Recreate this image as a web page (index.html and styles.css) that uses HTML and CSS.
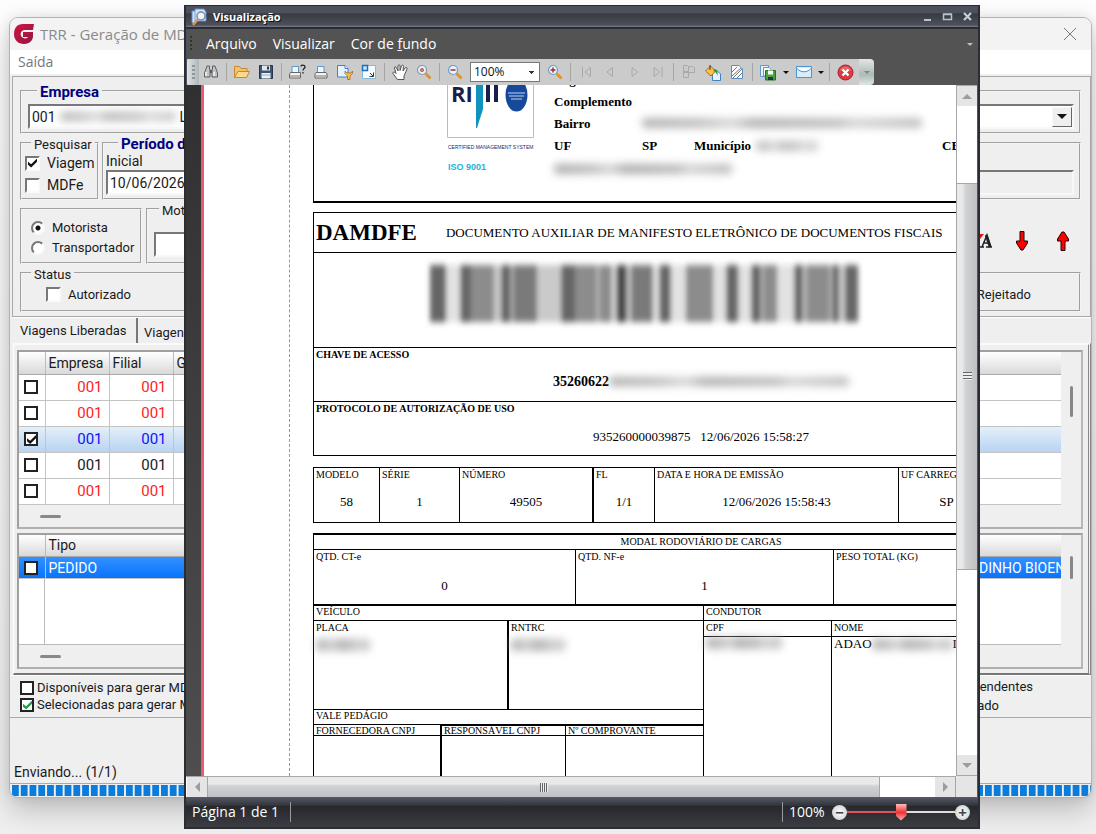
FILE: index.html
```html
<!DOCTYPE html>
<html lang="pt-BR">
<head>
<meta charset="utf-8">
<title>Visualização</title>
<link rel="stylesheet" href="styles.css">
</head>
<body>
<main class="app">
  <header class="app-title">
    <svg class="logo" width="22" height="22" viewBox="0 0 22 22"><defs><linearGradient id="lg" x1="0" y1="0" x2="1" y2="1"><stop offset="0" stop-color="#d3123f"/><stop offset="1" stop-color="#8d1a45"/></linearGradient></defs><path d="M21 1H10C4 1 1 5 1 11s4 10 10 10 9-4 9-8V9H10v5h5c-1 2-5 2-7-1-1-3 0-5 3-6h9z" fill="url(#lg)"/></svg>
    <h1>TRR - Geração de MDFe</h1>
    <button class="app-close" aria-label="Fechar"><svg width="14" height="14" viewBox="0 0 14 14"><path d="M1 1l12 12M13 1L1 13" stroke="#777" fill="none"/></svg></button>
  </header>
  <nav class="app-menu"><a href="#">Saída</a></nav>

  <form class="filters">
    <fieldset class="group company">
      <legend class="strong">Empresa</legend>
      <div class="field combo"><span>001</span><i class="smudge company-smudge"></i><span>LTDA</span><button type="button" class="combo-btn" aria-label="Abrir lista"><i class="tri"></i></button></div>
    </fieldset>
    <div class="row">
      <fieldset class="group search">
        <legend>Pesquisar</legend>
        <label><input class="tick" type="checkbox" checked>Viagem</label>
        <label><input class="tick" type="checkbox">MDFe</label>
      </fieldset>
      <fieldset class="group period">
        <legend class="strong">Período de</legend>
        <div class="period-row">
          <label class="stack">Inicial<input class="field" type="text" value="10/06/2026"></label>
          <input class="field flat" type="text" aria-label="Filtro" readonly>
        </div>
      </fieldset>
    </div>
    <div class="row">
      <fieldset class="group plain">
        <label><input class="dot" type="radio" name="quem" checked>Motorista</label>
        <label><input class="dot" type="radio" name="quem">Transportador</label>
      </fieldset>
      <fieldset class="group driver">
        <legend>Motorista</legend>
        <input class="field" type="text" aria-label="Motorista">
      </fieldset>
      <div class="tools">
        <button type="button" aria-label="Fonte"><svg width="22" height="20" viewBox="0 0 22 20"><path d="M6 3h7l-4 5z" fill="#e11"/><path d="M9 16h4M15 16h6M11 16l5-12 4 12M12.500 12h5" stroke="#222" stroke-width="1.500" fill="none"/><path d="M15 4l4 12" stroke="#222" stroke-width="2.500"/></svg></button>
        <button type="button" aria-label="Descer"><svg width="14" height="22" viewBox="0 0 14 22"><path d="M5 1.500h4V11h3.500v2L8 20H6l-4.500-7v-2H5z" fill="#f00" stroke="#200" stroke-width="1"/></svg></button>
        <button type="button" aria-label="Subir"><svg width="14" height="22" viewBox="0 0 14 22"><path d="M5 20.500h4V11h3.500V9L8 2H6L1.500 9v2H5z" fill="#f00" stroke="#200" stroke-width="1"/></svg></button>
      </div>
    </div>
    <fieldset class="group status">
      <legend>Status</legend>
      <div class="status-row">
        <label><input class="tick" type="checkbox">Autorizado</label>
        <label>Rejeitado</label>
      </div>
    </fieldset>
  </form>

  <div class="tabs"><button class="tab on">Viagens Liberadas</button><button class="tab">Viagens</button></div>
  <section class="tab-page">
    <div class="grid-box">
      <table class="grid">
        <colgroup><col class="c-tick"><col class="c-num"><col class="c-num"><col></colgroup>
        <thead><tr><th></th><th>Empresa</th><th>Filial</th><th>Grupo</th></tr></thead>
        <tbody>
          <tr class="red"><td><input class="box" type="checkbox" aria-label="Linha 1"></td><td>001</td><td>001</td><td></td></tr>
          <tr class="red"><td><input class="box" type="checkbox" aria-label="Linha 2"></td><td>001</td><td>001</td><td></td></tr>
          <tr class="picked"><td><input class="box" type="checkbox" aria-label="Linha 3" checked></td><td>001</td><td>001</td><td></td></tr>
          <tr><td><input class="box" type="checkbox" aria-label="Linha 4"></td><td>001</td><td>001</td><td></td></tr>
          <tr class="red"><td><input class="box" type="checkbox" aria-label="Linha 5"></td><td>001</td><td>001</td><td></td></tr>
        </tbody>
      </table>
      <i class="vbar"></i><i class="hbar"></i>
    </div>
    <div class="grid-box second">
      <div class="grid-fill">
      <table class="grid">
        <colgroup><col class="c-tick"><col><col class="c-name"></colgroup>
        <thead><tr><th></th><th>Tipo</th><th></th></tr></thead>
        <tbody><tr class="blue"><td><input class="box" type="checkbox" aria-label="Pedido"></td><td>PEDIDO</td><td>DINHO BIOEN</td></tr></tbody>
      </table>
      <div class="grid-empty"></div>
      </div>
      <i class="vbar"></i><i class="hbar"></i>
    </div>
  </section>
  <section class="notes">
    <div><label><input class="box" type="checkbox">Disponíveis para gerar MDFe</label><label><input class="box green" type="checkbox" checked>Selecionadas para gerar MDFe</label></div>
    <div class="notes-right"><span>Pendentes</span><span>Autorizado</span></div>
  </section>
  <footer class="sending"><p>Enviando... (1/1)</p><div class="progress" role="progressbar" aria-label="Enviando"><i></i></div></footer>
</main>

<section class="viewer">
  <header class="v-title">
    <svg width="16" height="18" viewBox="0 0 16 18"><path d="M1 3h3V1h9l2 3v9H5v2H1z" fill="#cfe3fa" stroke="#5c8fd0"/><path d="M4 3v10" stroke="#7aa5de"/><circle cx="10" cy="8" r="4" fill="#e8f6ff" stroke="#889" stroke-width="1.500"/><path d="M7 11l-5 6" stroke="#e0954a" stroke-width="2.500"/></svg>
    <h2>Visualização</h2>
    <button aria-label="Minimizar"><svg width="11" height="11"><path d="M2 9h7" stroke="#b5c3cd" stroke-width="2"/></svg></button>
    <button aria-label="Maximizar"><svg width="11" height="11"><path d="M1.500 3.500h8v5h-8zM1 3h9" stroke="#b5c3cd" stroke-width="1.500" fill="none"/></svg></button>
    <button aria-label="Fechar"><svg width="11" height="11"><path d="M2 2l7 7M9 2L2 9" stroke="#c3ced6" stroke-width="2.200"/></svg></button>
  </header>
  <nav class="v-menu"><i class="grip"></i><a href="#">Arquivo</a><a href="#">Visualizar</a><a href="#">Cor de <u>f</u>undo</a><i class="tri small pale"></i></nav>
  <div class="v-tools">
    <div class="tool-strip">
      <i class="grip light"></i>
      <button aria-label="Localizar"><svg width="16" height="16" viewBox="0 0 16 16"><path d="M4 2h2.500v3L7 6v7H1.500V9z M12 2H9.500v3L9 6v7h5.500V9z" fill="#bfc4c8" stroke="#555" stroke-width=".9"/><path d="M3 8v4M11 8v4" stroke="#fff" stroke-width="1.200"/><path d="M7 6h2v3H7z" fill="#555"/></svg></button>
      <i class="sep"></i>
      <button aria-label="Abrir"><svg width="18" height="16" viewBox="0 0 18 16"><path d="M1.500 13.500V2.500h5l1.500 2h6v3" fill="#f3c269" stroke="#c8862d"/><path d="M1.500 13.500L5 7.500h11.500L13.500 13.500z" fill="#ffd98c" stroke="#c8862d"/></svg></button>
      <button aria-label="Salvar"><svg width="16" height="16" viewBox="0 0 16 16"><path d="M1.500 1.500h13v13h-13z" fill="#3f5670" stroke="#27384c"/><path d="M4 1.500h8v5H4z" fill="#dfe6ec"/><path d="M3.500 9h9v5.500h-9z" fill="#eaf0f4"/><path d="M9 2.500h2v3H9z" fill="#27384c"/><path d="M4 11h8" stroke="#9ab"/></svg></button>
      <i class="sep"></i>
      <button aria-label="Imprimir com opções"><svg width="18" height="16" viewBox="0 0 18 16"><path d="M4 8V2.500h6.500V8" fill="#eef7ff" stroke="#5f97c4"/><path d="M2.500 8.500h10v5.500h-11V10z" fill="#f2f2f2" stroke="#666"/><path d="M2 12h10" stroke="#777"/><path d="M13 2.500c0-2 4-2 4 .5 0 1.500-2 1.500-2 3.500M15 8v1.500" stroke="#222" stroke-width="1.300" fill="none"/></svg></button>
      <button aria-label="Imprimir"><svg width="16" height="16" viewBox="0 0 16 16"><path d="M4.500 8V2.500H11V8" fill="#eef7ff" stroke="#5f97c4"/><path d="M3 8.500h10l1 1.500v4H2v-4z" fill="#f2f2f2" stroke="#666"/><path d="M2.500 12h11" stroke="#777"/></svg></button>
      <button aria-label="Configurar página"><svg width="18" height="16" viewBox="0 0 18 16"><path d="M1.500 1.500H9l3 3v8.500H1.500z" fill="#e6f3ff" stroke="#3c82c4"/><path d="M9 1.500v3h3" fill="#fff" stroke="#3c82c4"/><path d="M9 7v2.500l2.500 2.500v3.500h2.500V12L16.500 9.500V7l-1.500 2h-4z" fill="#ffc246" stroke="#a8691a" stroke-width=".8"/></svg></button>
      <button aria-label="Escala"><svg width="16" height="16" viewBox="0 0 16 16"><path d="M1.500 1.500h13v13h-13z" fill="#f6fbff" stroke="#8ab9dc"/><path d="M1.500 1.500h5v5h-5z" fill="#c7e2fa" stroke="#1c6fbd" stroke-width="1.500"/><path d="M9 9l3 3M12.500 8.500v4h-4" stroke="#333" fill="none"/></svg></button>
      <i class="sep"></i>
      <button aria-label="Mover"><svg width="17" height="17" viewBox="0 0 17 17"><path d="M5.500 15.500L1 9.500c-.5-1.500 1-2 2-1l1 1L2.500 4C2.500 2.500 4 2.500 4.500 4L6 7V2c0-1.500 2-1.500 2 0v4.500L9.500 2c.5-1.500 2-1 2 .5L11 7l2-3c1-1.200 2.500-.5 2 1l-3 7v3.500z" fill="#fff" stroke="#444" stroke-width=".9"/></svg></button>
      <button aria-label="Lupa"><svg width="16" height="16" viewBox="0 0 16 16"><path d="M9.500 9.500l5 5" stroke="#d9962f" stroke-width="2.800"/><circle cx="6" cy="6" r="4.500" fill="#e7f3fc" stroke="#8299ac" stroke-width="1.200"/><circle cx="6" cy="6" r="1.600" fill="#e58a80" stroke="#a44" stroke-width=".8"/></svg></button>
      <i class="sep"></i>
      <button aria-label="Reduzir"><svg width="16" height="16" viewBox="0 0 16 16"><path d="M9.500 9.500l5 5" stroke="#d9962f" stroke-width="2.800"/><circle cx="6" cy="6" r="4.500" fill="#e7f3fc" stroke="#6d9ccb" stroke-width="1.200"/><path d="M3.500 6h5" stroke="#a03030" stroke-width="1.500"/></svg></button>
      <select class="zoom" aria-label="Zoom"><option>100%</option></select>
      <button aria-label="Ampliar"><svg width="16" height="16" viewBox="0 0 16 16"><path d="M9.500 9.500l5 5" stroke="#d9962f" stroke-width="2.800"/><circle cx="6" cy="6" r="4.500" fill="#e7f3fc" stroke="#6d9ccb" stroke-width="1.200"/><path d="M3.500 6h5M6 3.500v5" stroke="#a03030" stroke-width="1.500"/></svg></button>
      <i class="sep"></i>
      <button aria-label="Primeira"><svg class="off" width="16" height="16" viewBox="0 0 16 16"><path d="M4.500 3v10M12.500 3.500v9L7 8z"/></svg></button>
      <button aria-label="Anterior"><svg class="off" width="16" height="16" viewBox="0 0 16 16"><path d="M10.500 3.500v9L5 8z"/></svg></button>
      <button aria-label="Próxima"><svg class="off" width="16" height="16" viewBox="0 0 16 16"><path d="M6 3.500v9L11.500 8z"/></svg></button>
      <button aria-label="Última"><svg class="off" width="16" height="16" viewBox="0 0 16 16"><path d="M4 3.500v9L9.500 8zM12 3v10"/></svg></button>
      <i class="sep"></i>
      <button aria-label="Várias páginas"><svg class="off" width="16" height="16" viewBox="0 0 16 16"><path d="M2.500 1.500h4l1 1v5h-5zM8.500 3.500V2.500h3l1 1h1v5h-6M2.500 8.500h5v5h-5z"/></svg></button>
      <button aria-label="Cor"><svg width="18" height="17" viewBox="0 0 18 17"><path d="M8.500 7h5l3 3v6.500h-8z" fill="#e6f3ff" stroke="#3c82c4"/><path d="M1.500 7l5-5 5 5-4.500 5z" fill="#ffc246" stroke="#a8691a"/><path d="M6 1v5" stroke="#333"/><path d="M10 5c3 0 4 2 3.500 7-1-3-2-4-4-5z" fill="#2f9a3c"/></svg></button>
      <button aria-label="Marca d’água"><svg width="16" height="16" viewBox="0 0 16 16"><path d="M2.500 1.500H10l3.500 3.500v9.500h-11z" fill="#f7fbff" stroke="#5c8fc0"/><path d="M3 8l5-5M3 12l9-8M4 14l9-9M8 14l5-5" stroke="#777"/></svg></button>
      <i class="sep"></i>
      <button aria-label="Exportar"><svg width="18" height="17" viewBox="0 0 18 17"><path d="M1.500 1.500h8v11h-8z" fill="#e6f3ff" stroke="#5c9ace"/><path d="M4.500 3.500H10l2 2V12H4.500z" fill="#fff" stroke="#5c9ace"/><path d="M6.500 6.500h10v9.500h-10z" fill="#4aa63a" stroke="#267018"/><path d="M9 6.500h5v4H9z" fill="#fff"/><path d="M9 13h5v3H9z" fill="#234"/></svg></button>
      <button class="drop" aria-label="Formatos"><i class="tri small"></i></button>
      <button aria-label="E-mail"><svg width="18" height="14" viewBox="0 0 18 14"><path d="M1.500 1.500h15v11h-15z" fill="#d9eefd" stroke="#4a94cf"/><path d="M1.500 3c4 5 11 5 15 0" fill="#fff" stroke="#4a94cf"/></svg></button>
      <button class="drop narrow" aria-label="Opções de e-mail"><i class="tri small"></i></button>
      <i class="sep"></i>
      <button aria-label="Fechar visualização"><svg width="17" height="17" viewBox="0 0 17 17"><circle cx="8.500" cy="8.500" r="7.500" fill="#da3a40" stroke="#a81f2a"/><path d="M2.500 7c1-6 11-6 12 0-4-2-8-2-12 0z" fill="#f07a7a" opacity=".7"/><path d="M5.500 5.500l6 6M11.500 5.500l-6 6" stroke="#fff" stroke-width="2.400"/></svg></button>
    </div>
    <button class="more" aria-label="Mais botões"><i class="tri small pale"></i></button>
  </div>

  <div class="v-body">
    <div class="view">
      <div class="page">
        <article class="sheet">
          <section class="issuer">
            <svg class="cert" width="90" height="110" viewBox="0 0 90 110">
              <path d="M.5 0v72.500h86V0" fill="#fff" stroke="#b9bcc8"/>
              <text x="4" y="37" class="rina">RI</text><path d="M29 20h7v24l-6 19h-1z" fill="#0f93bd"/><path d="M39 20h4v17h-4zM47 20h4v17h-4z" fill="#1a1f4a"/>
              <ellipse cx="69.500" cy="30" rx="11" ry="16.500" fill="#16489c"/><path d="M61 28h17M62 31h15M64 34h11" stroke="#c4d4f0" stroke-width="1"/>
              <text x="1" y="84" class="cms">CERTIFIED MANAGEMENT SYSTEM</text><text x="1" y="105" class="iso">ISO 9001</text>
            </svg>
            <div class="info">
              <b>Logradouro</b><i></i><i></i><i></i>
              <b>Complemento</b><i></i><i></i><i></i>
              <b>Bairro</b><i class="smudge wide"></i>
              <b>UF</b><b>SP</b><span class="city"><b>Município</b><i class="smudge mid"></i></span><b>CEP</b>
              <i class="smudge mail"></i>
            </div>
          </section>

          <section class="block key">
            <div class="head"><strong>DAMDFE</strong><span>DOCUMENTO AUXILIAR DE MANIFESTO ELETRÔNICO DE DOCUMENTOS FISCAIS</span></div>
            <div class="bars"><svg width="450" height="76" viewBox="420 255 450 76"><defs><filter id="bl" x="-5%" y="-20%" width="110%" height="140%"><feGaussianBlur stdDeviation="2.500 3"/></filter></defs><g filter="url(#bl)"><path d="M430 265h429v57H430z" fill="#cacaca"/><path d="M447 265h13v57h-13zM612 265h4v57h-4zM653 265h6v57h-6zM671 265h14v57h-14zM714 265h12v57h-12zM740 265h11v57h-11zM778 265h16v57h-16z" fill="#e2e2e2"/><g fill="#666"><path d="M430 265h16v57h-16zM460 265h11v57h-11zM501 265h10v57h-10zM561 265h14v57h-14zM659 265h12v57h-12zM726 265h12v57h-12zM751 265h10v57h-10zM794 265h9v57h-9zM832 265h7v57h-7zM845 265h13v57h-13z"/></g><g fill="#8c8c8c"><path d="M471 265h23v57h-23zM575 265h22v57h-22zM599 265h13v57h-13zM686 265h27v57h-27zM763 265h14v57h-14zM806 265h24v57h-24z"/></g><path d="M513 265h24v57h-24zM631 265h22v57h-22z" fill="#7a7a7a"/><path d="M616 265h11v57h-11z" fill="#4c4c4c"/></g></svg></div>
            <div class="line chave"><b>CHAVE DE ACESSO</b><p class="code"><b>35260622</b><i class="smudge key-smudge"></i></p></div>
            <div class="line prot"><b>PROTOCOLO DE AUTORIZAÇÃO DE USO</b><p>935260000039875 &nbsp; 12/06/2026 15:58:27</p></div>
          </section>

          <section class="block ids">
            <div><small>MODELO</small><p>58</p></div><div><small>SÉRIE</small><p>1</p></div><div class="thick"><small>NÚMERO</small><p>49505</p></div><div><small>FL</small><p>1/1</p></div><div><small>DATA E HORA DE EMISSÃO</small><p>12/06/2026 15:58:43</p></div><div><small>UF CARREG.</small><p>SP</p></div>
          </section>

          <section class="modal">
            <h3>MODAL RODOVIÁRIO DE CARGAS</h3>
            <div class="totals"><div><small>QTD. CT-e</small><p>0</p></div><div><small>QTD. NF-e</small><p>1</p></div><div><small>PESO TOTAL (KG)</small></div></div>
            <div class="halves">
              <div class="vehicle">
                <h4>VEÍCULO</h4>
                <div class="plates"><div><small>PLACA</small><i class="smudge tag"></i></div><div><small>RNTRC</small><i class="smudge tag"></i></div></div>
                <h4>VALE PEDÁGIO</h4>
                <div class="toll"><div><small>FORNECEDORA CNPJ</small></div><div><small>RESPONSÁVEL CNPJ</small></div><div><small>Nº COMPROVANTE</small></div></div>
              </div>
              <div class="driver-info">
                <h4>CONDUTOR</h4>
                <div class="people"><div><small>CPF</small><p><i class="smudge cpf"></i></p></div><div><small>NOME</small><p>ADAO<i class="smudge name"></i>D</p></div></div>
              </div>
            </div>
          </section>
        </article>
      </div>
    </div>
    <div class="vscroll"><button aria-label="Acima"><i class="tri up"></i></button><i class="rail"></i><i class="thumb"></i><i class="rest"></i><button aria-label="Abaixo"><i class="tri down"></i></button></div>
    <div class="hscroll"><button aria-label="Esquerda"><i class="tri left"></i></button><i class="thumb"></i><i class="rest"></i><button aria-label="Direita"><i class="tri right"></i></button></div>
    <i class="corner"></i>
  </div>
  <footer class="v-status"><span class="pages">Página 1 de 1</span><div class="zoomer"><label for="z">100%</label><button aria-label="Menos zoom">−</button><input id="z" type="range" min="0" max="100" value="50"><button aria-label="Mais zoom">+</button></div></footer>
</section>
</body>
</html>
```

FILE: styles.css
```css
* { box-sizing: border-box; }
body { margin: 0; min-height: 100vh; display: flex; position: relative; overflow: hidden; background: linear-gradient(#fdfdfd, #f6f6f6 60%, #efefef); font: 13px/16px Roboto, sans-serif; color: #1a1a1a; }
button { border: 0; padding: 0; background: none; font: inherit; color: inherit; display: flex; align-items: center; justify-content: center; }
input, select { font: inherit; color: inherit; margin: 0; }
a { color: inherit; text-decoration: none; }
p, h1, h2, h3, h4 { margin: 0; font: inherit; }
i { font-style: normal; display: block; }
svg { display: block; flex: none; }

/* main window */
.app { flex: 1; min-width: 0; margin: 17px 4px 36px 9px; border: 1px solid #b3b3b3; border-radius: 9px; overflow: hidden; background: #efefef; display: flex; flex-direction: column; box-shadow: 0 12px 28px rgba(0,0,0,.22), 0 0 12px rgba(0,0,0,.08); }
.app-title { height: 32px; background: #f3f3f3; display: flex; align-items: center; gap: 5px; padding: 0 14px 0 3px; font: 15px/20px "Open Sans", sans-serif; color: #8a8a8a; }
.app-title h1 { flex: 1; }
.app-menu { background: #fff; padding: 3px 8px; font: 14px/18px "Open Sans", sans-serif; color: #777; }
.filters { margin: 2px 0 0 2px; border: 1px solid #a8a8a8; padding: 5px 9px 4px 7px; }
.group { margin: 0; padding: 0; min-width: 0; border: 2px groove #f4f4f4; }
.group legend { margin-left: 9px; padding: 3px 3px 0; line-height: 15px; }
.group legend.strong { color: #000080; font-weight: bold; font-size: 15px; margin-left: 14px; }
.group label { display: flex; align-items: center; }
.field { border: 2px solid; border-color: #777 #f8f8f8 #f8f8f8 #777; background: #fff; height: 25px; padding: 0 2px; font-size: 14px; border-radius: 0; outline: 0; min-width: 0; }
.company { padding: 4px 5px 3px 6px; }
.group.company legend { margin-left: 9px; }
.combo { display: flex; align-items: center; gap: 4px; padding-right: 0; }
.combo-btn { margin-left: auto; width: 20px; height: 20px; background: #efefef; border: 1px solid; border-color: #f8f8f8 #666 #666 #f8f8f8; }
.tri { width: 0; height: 0; border: 5px solid transparent; border-top-color: #111; border-bottom-width: 0; }
.tri.small { border-width: 3px 3px 0; }
.tri.pale { border-top-color: #b7c1c8; }
.smudge { height: 14px; border-radius: 4px; background: linear-gradient(90deg, #999, #aaa 20%, #ccc 32%, #999 40%, #aaa 70%, #c8c8c8 76%, #aaa); filter: blur(4px); }
.company-smudge { width: 116px; height: 9px; opacity: .7; }
.row { display: flex; gap: 3px; }
.search { width: 79px; }
.search label { height: 22px; gap: 7px; padding-left: 3px; font-size: 14px; }
.tick { appearance: none; width: 15px; height: 15px; background: #fff; border: 2px solid; border-color: #777 #fafafa #fafafa #777; }
.tick:checked::after, .box:checked::after { content: ""; display: block; width: 9px; height: 9px; background: #111; clip-path: polygon(0 35%, 35% 65%, 100% 0, 100% 35%, 35% 100%, 0 70%); }
.tick:checked::after { margin: 1px; }
.period { flex: 1; }
.period-row { display: flex; align-items: flex-end; gap: 40px; padding: 1px 5px 3px 2px; }
.group label.stack { display: grid; gap: 1px; width: 112px; font-size: 14px; }
.flat { flex: 1; background: #efefef; }
.plain { width: 122px; margin-top: 8px; padding: 8px 0 0 9px; }
.plain label { height: 20px; gap: 7px; }
.dot { appearance: none; width: 14px; height: 14px; border-radius: 50%; background: #fff; border: 2px solid; border-color: #777 #f8f8f8 #f8f8f8 #777; }
.dot:checked { background: radial-gradient(#111 2px, #fff 3px); }
.driver { width: 400px; margin-left: 1px; height: 64px; padding: 14px 6px 0; }
.group.driver legend { margin-left: 5px; }
.driver .field { width: 100%; }
.tools { margin-left: auto; display: flex; align-items: center; gap: 27px; padding: 18px 11px 0 0; }
.tools button:first-child { margin-right: -5px; }
.status-row { display: flex; justify-content: space-between; height: 25px; margin-bottom: 3px; padding: 0 48px 0 24px; }
.status-row label { gap: 7px; }
.tabs { display: flex; height: 26px; margin: 0 0 0 2px; border-top: 1px solid #fff; }
.tab { align-items: flex-start; padding: 5px 7px 0 8px; font-size: 13px; border-right: 2px solid #777; height: 25px; width: 126px; justify-content: flex-start; }
.tab + .tab { padding: 7px 7px 0 6px; border: 0; }
.tab-page { margin: 0 0 0 3px; padding: 5px 5px 4px 3px; border-top: 2px solid #fafafa; border-right: 3px double #888; border-bottom: 2px solid #777; border-left: 1px solid #fff; display: grid; gap: 4px; }
.grid-box { border: 2px solid #a0a0a0; border-right-color: #b8b8b8; border-bottom-color: #b0b0b0; display: grid; grid-template: auto 22px / minmax(0,1fr) 20px; }
.grid { width: 100%; table-layout: fixed; border-collapse: collapse; background: #fff; font-size: 15px; }
.c-tick { width: 26px; } .c-num { width: 64px; } .c-name { width: 82px; }
.grid th { height: 22px; padding: 0 3px; font-weight: normal; font-size: 14px; text-align: left; background: linear-gradient(#fff, #d9d9d9); border-right: 1px solid #bbb; border-bottom: 1px solid #aaa; }
.grid td { height: 26px; padding: 0 6px; text-align: right; border: solid #c4c4c4; border-width: 0 1px 1px 0; white-space: nowrap; overflow: hidden; }
.grid th:first-child, .grid td:first-child { padding: 0 0 0 5px; text-align: left; }
.grid th:last-child, .grid td:last-child { border-right: 0; }
.red { color: #f22; }
.picked { color: #11f; background: linear-gradient(#e6f0fa, #b8d3f1); }
.blue { color: #fff; background: linear-gradient(#3391ff, #0672fb); }
.second .grid td { height: 22px; padding: 0 3px; text-align: left; font-size: 14px; }
.second .grid td:first-child { padding-left: 5px; }
.second .grid td:last-child { padding: 0; text-overflow: clip; }
.second .grid td:nth-child(2), .second .grid th:nth-child(2) { border-right: 0; }
.grid-fill { background: #fff; border-bottom: 1px solid #bbb; }
.grid-empty { width: 26px; height: 65px; border-right: 1px solid #bbb; }
.box { appearance: none; display: block; width: 14px; height: 14px; background: #fff; border: 2px solid #222; padding: 1px; }
.box.green:checked::after { background: #23a045; }
.vbar { width: 3px; height: 31px; background: #888; border-radius: 2px; margin: 34px 0 0 9px; }
.second .vbar { height: 23px; margin-top: 21px; }
.hbar { width: 21px; height: 3px; background: #888; border-radius: 2px; margin: 10px 0 0 21px; }
.notes { display: flex; justify-content: space-between; padding: 3px 58px 3px 10px; border-top: 1px solid #fff; border-bottom: 1px solid #aaa; }
.notes label { display: flex; align-items: center; gap: 3px; height: 17px; }
.notes-right { display: grid; gap: 3px; justify-items: end; }
.notes-right span:last-child { padding-right: 34px; }
.sending { margin-top: auto; }
.sending p { padding: 0 4px 3px; font-size: 14px; }
.progress { height: 14px; border-top: 1px solid #aaa; padding: 1px 0 0 2px; }
.progress i { height: 11px; background: linear-gradient(90deg, #0b7bdc 76%, transparent 76%) 0 0 / calc(100% / 123) 100%; }

/* preview window */
.viewer { position: absolute; top: 5px; right: 116px; bottom: 5px; left: 184px; border: 2px solid #2a2d33; border-top-width: 1px; display: flex; flex-direction: column; background: #535353; box-shadow: inset 1px 0 #4c5260; }
.v-title { height: 23px; display: flex; align-items: center; gap: 10px; padding: 0 6px 0 5px; color: #fff; background: linear-gradient(#4c505c, #4d515c 35%, #383a3f 36%, #4d505a 90%, #7b7f88); border-bottom: 2px solid #2a2d33; }
.v-title h2 { flex: 1; margin-left: -4px; font: bold 11px/16px "Open Sans", sans-serif; text-shadow: 1px 1px #111; }
.v-title button { margin-right: -1px; }
.v-menu { height: 30px; display: flex; align-items: center; gap: 16px; color: #fff; font: 14px/20px "Open Sans", sans-serif; padding: 0 5px 0 0; }
.v-menu .tri { margin-left: auto; }
.grip { width: 2px; height: 16px; margin: 0 -2px 0 4px; background: repeating-linear-gradient(#333 0 2px, transparent 2px 4px); }
.v-tools { display: flex; height: 26px; padding-left: 1px; }
.tool-strip { display: flex; align-items: center; background: #cbcbcb; }
.tool-strip button { width: 24px; height: 24px; }
.tool-strip button.drop { width: 12px; }
.tool-strip button.narrow { width: 10px; }
.grip.light { width: 12px; height: 26px; margin: 0; border-radius: 4px 0 0 4px; background: linear-gradient(90deg, #dfe3e5, #aeb6ba); display: grid; place-items: center; }
.grip.light::after { content: ""; width: 3px; height: 15px; background: repeating-linear-gradient(#8f979b 0 2px, transparent 2px 4px); }
.sep { width: 1px; height: 18px; margin: 0 3px; background: #a5a5a5; }
.off { fill: none; stroke: #a8a8a8; }
.zoom { width: 70px; height: 20px; margin: 0 3px; padding: 0 3px; border: 1px solid #777; border-radius: 0; appearance: none; font: 12px/16px "Open Sans", sans-serif; color: #111; background: linear-gradient(#333, #333) right 5px top 8px / 5px 1px no-repeat, linear-gradient(#333, #333) right 6px top 9px / 3px 1px no-repeat, linear-gradient(#333, #333) right 7px top 10px / 1px 1px no-repeat, #fff; }
.more { width: 15px; border-radius: 0 4px 4px 0; background: linear-gradient(#e2e6e5, #aebab6 60%, #dfe7e3); margin-left: 2px; box-shadow: -2px 0 #cbcbcb; }
.more .tri { border-top-color: #7a8890; }
.v-body { flex: 1; min-height: 0; margin-right: 1px; display: grid; grid-template: minmax(0,1fr) 21px / minmax(0,1fr) 21px; }
.view { overflow: hidden; min-width: 0; padding-left: 15px; background: linear-gradient(#303030, #4e4e4e); display: flex; }
.page { flex: 1; min-width: 0; overflow: hidden; background: #fff; border-left: 3px solid #ea5a70; display: flex; }
.page::before { content: ""; width: 85px; flex: none; border-right: 1px dashed #999; }
.sheet { flex: none; width: 776px; margin: -24px 0 0 23px; font: 13px/15px "Liberation Serif", serif; color: #000; }
.sheet small, .sheet h3, .sheet h4 { font-size: 10px; line-height: 12px; display: block; }
.issuer { height: 142px; border: solid #000; border-width: 0 1px 2px; padding-top: 7px; display: flex; gap: 17px; padding-left: 133px; }
.cert { margin-top: -8px; height: 120px; }
.rina { font: bold 22px "Open Sans", sans-serif; fill: #1a1f4a; }
.cms { font: 5px "Liberation Sans", sans-serif; fill: #1f2658; }
.iso { font: bold 9px "Liberation Sans", sans-serif; fill: #22b4d6; }
.info { display: grid; grid-template-columns: 88px 52px 248px 60px; grid-template-rows: 22px 22px 22px 23px 23px; align-items: center; align-content: start; }
.smudge.wide { grid-column: span 3; width: 280px; height: 10px; opacity: .75; }
.city { display: flex; align-items: center; gap: 5px; }
.smudge.mid { width: 62px; height: 10px; opacity: .65; }
.smudge.mail { grid-column: span 4; width: 178px; height: 10px; opacity: .8; }
.block { border: 1px solid #000; }
.key { margin-top: 9px; }
.head { height: 39px; display: flex; align-items: center; gap: 29px; padding: 0 0 1px 2px; }
.head strong { font-size: 23px; }
.bars, .line { border-top: 1px solid #000; }
.bars { height: 95px; display: flex; justify-content: flex-start; padding: 2px 0 0 106px; }
.line { height: 54px; padding: 1px 2px; text-align: center; }
.line > b { display: block; text-align: left; font-size: 10px; line-height: 12px; }
.line p { margin-top: 14px; }
.line .code { display: flex; justify-content: center; align-items: center; font-size: 14px; margin-top: 13px; }
.key-smudge { width: 240px; height: 9px; opacity: .8; }
.ids { margin-top: 11px; height: 56px; display: grid; grid-template-columns: 66px 80px 134px 61px 244px 1fr; }
.ids > div, .totals > div { padding: 1px 2px; border-right: 1px solid #000; }
.ids > .thick { border-right-width: 2px; }
.ids > div:last-child, .totals > div:last-child { border-right: 0; }
.ids p { text-align: center; margin-top: 13px; }
.ids > div:last-child { padding-right: 96px; }
.modal { margin-top: 10px; border: solid #000; border-width: 2px 1px 1px; }
.sheet h3 { text-align: center; height: 14px; line-height: 14px; }
.totals { border-top: 1px solid #000; height: 55px; display: grid; grid-template-columns: 262px 258px 1fr; }
.totals p { text-align: center; margin-top: 15px; }
.halves { border-top: 2px solid #000; display: grid; grid-template-columns: 390px 1fr; }
.sheet h4 { height: 14px; padding-left: 2px; }
.vehicle { border-right: 1px solid #000; }
.plates { border-top: 1px solid #000; border-bottom: 1px solid #000; height: 90px; display: grid; grid-template-columns: 195px 1fr; }
.plates > div { padding: 1px 2px; }
.plates > div:first-child { border-right: 2px solid #000; }
.tag { width: 54px; height: 12px; margin-top: 5px; opacity: .75; }
.toll { border-top: 1px solid #000; display: grid; grid-template-columns: 128px 124px 1fr; }
.toll > div { height: 60px; border-right: 2px solid #000; }
.toll > div + div { border-right-width: 1px; border-top: 1px solid #000; }
.toll > div:last-child { border-right: 0; }
.toll small { height: 11px; padding-left: 2px; border-bottom: 1px solid #000; line-height: 11px; }
.toll > div + div small { height: 10px; line-height: 10px; }
.people { border-top: 1px solid #000; height: 175px; display: grid; grid-template-columns: 128px 1fr; }
.people small { padding: 1px 2px; height: 16px; border-bottom: 1px solid #000; }
.people > div:first-child { border-right: 1px solid #000; }
.people p { padding: 0 2px; display: flex; align-items: center; line-height: 14px; }
.cpf { width: 76px; height: 12px; opacity: .75; }
.name { width: 81px; height: 11px; opacity: .75; }

.vscroll, .hscroll { display: flex; background: #fff; }
.vscroll { flex-direction: column; border: solid #a5a7ab; border-width: 1px 0 1px 1px; }
.hscroll { border: solid #a5a7ab; border-width: 1px 1px 0 0; padding-left: 1px; }
.vscroll button { height: 20px; background: #e5e5e5; }
.hscroll button { width: 20px; background: #e5e5e5; }
.vscroll .rail { flex: 77; }
.vscroll .thumb { flex: 386; border: solid #a5a7ab; border-width: 1px 0; background: repeating-linear-gradient(#666 0 1px, #eee 1px 3px) center / 9px 8px no-repeat, linear-gradient(90deg, #eaeaea 25%, #d0d1d3 45%, #bfc0c3); }
.vscroll .rest { flex: 186; }
.hscroll .thumb { flex: 671; border: solid #a5a7ab; border-width: 0 1px; background: repeating-linear-gradient(90deg, #666 0 1px, #eee 1px 2px) center / 8px 9px no-repeat, linear-gradient(#e9e9e9 35%, #d0d1d3 45%, #c0c1c4); }
.hscroll .rest { flex: 55; }
.tri.up { border-color: transparent transparent #9a9ca0; border-width: 0 5px 5px; }
.tri.down { border-top-color: #9a9ca0; }
.tri.left { border-color: transparent #9a9ca0 transparent transparent; border-width: 5px 5px 5px 0; }
.tri.right { border-color: transparent transparent transparent #9a9ca0; border-width: 5px 0 5px 5px; }
.corner { background: #e5e5e5; }
.v-status { height: 30px; display: flex; justify-content: space-between; align-items: center; color: #fff; font: 14px/20px "Open Sans", sans-serif; padding: 0 8px 0 6px; background: linear-gradient(#555a64, #33353c 28%, #26282c 30%, #3b3d43); }
.pages { padding-right: 11px; border-right: 1px solid #999; }
.zoomer { display: flex; align-items: center; border-left: 1px solid #999; padding-left: 6px; }
.zoomer label { width: 43px; }
.zoomer button { width: 15px; height: 15px; border-radius: 50%; background: radial-gradient(#fff, #c3c7cb); color: #444; font: bold 15px/15px "Open Sans", sans-serif; }
.zoomer input { appearance: none; width: 108px; height: 20px; background: linear-gradient(90deg, #e0525c 50%, #ddd 50%) center / 100% 2px no-repeat; }
.zoomer input::-webkit-slider-thumb { appearance: none; width: 11px; height: 17px; background: linear-gradient(#fbb, #e33 50%, #fbb); clip-path: polygon(0 0, 100% 0, 100% 70%, 50% 100%, 0 70%); }
```
